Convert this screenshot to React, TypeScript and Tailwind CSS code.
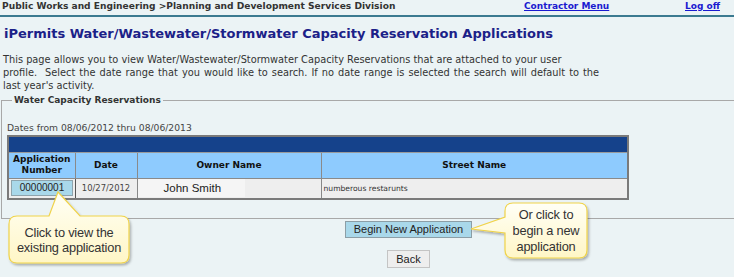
import React from "react";

const verdana = { fontFamily: '"DejaVu Sans", Verdana, sans-serif' };
const arial = { fontFamily: '"Liberation Sans", Arial, sans-serif' };

function Callouts() {
  return (
    <svg
      className="absolute left-0 top-0 pointer-events-none"
      width="734"
      height="277"
      viewBox="0 0 734 277"
    >
      <defs>
        <linearGradient id="cg" x1="0" y1="0" x2="0" y2="1">
          <stop offset="0" stopColor="#fffff6" />
          <stop offset="1" stopColor="#fff6c6" />
        </linearGradient>
        <filter id="sh" x="-20%" y="-20%" width="140%" height="140%">
          <feDropShadow dx="1.5" dy="2" stdDeviation="1.2" floodColor="#000" floodOpacity="0.28" />
        </filter>
      </defs>
      <path
        d="M 17 216 L 49 216 L 58 192 L 80 216 L 121 216 Q 129 216 129 224 L 129 255 Q 129 263 121 263 L 17 263 Q 9 263 9 255 L 9 224 Q 9 216 17 216 Z"
        fill="url(#cg)"
        stroke="#f0d34a"
        strokeWidth="1.2"
        filter="url(#sh)"
      />
      <path
        d="M 513 203 L 579 203 Q 587 203 587 211 L 587 250 Q 587 258 579 258 L 513 258 Q 505 258 505 250 L 505 233 L 471 229 L 505 217 L 505 211 Q 505 203 513 203 Z"
        fill="url(#cg)"
        stroke="#f0d34a"
        strokeWidth="1.2"
        filter="url(#sh)"
      />
    </svg>
  );
}

export default function App() {
  return (
    <div
      className="relative w-[734px] h-[277px] overflow-hidden bg-[#ebf3f5] text-[#333]"
      style={verdana}
    >
      {/* top bar */}
      <div className="flex h-[15px] items-start border-b-2 border-[#3b7a90] box-content text-[9px] font-bold leading-[12px]">
        <div className="w-[524px] pl-[2px] text-[9.1px] text-[#333] whitespace-nowrap">
          Public Works and Engineering &gt;Planning and Development Services Division
        </div>
        <a className="w-[161px] text-[#1a1ad0] underline whitespace-nowrap" href="#">
          Contractor Menu
        </a>
        <a className="text-[#1a1ad0] underline whitespace-nowrap" href="#">
          Log off
        </a>
      </div>

      {/* title */}
      <h1 className="mt-[9px] pl-[4px] text-[13px] font-bold leading-[16px] text-[#1b2188] whitespace-nowrap">
        iPermits Water/Wastewater/Stormwater Capacity Reservation Applications
      </h1>

      {/* description */}
      <p className="mt-[11px] pl-[3px] text-[9.8px] leading-[13px] text-[#333] whitespace-nowrap">
        This page allows you to view Water/Wastewater/Stormwater Capacity Reservations that are attached to your user
        <br />
        <span className="[word-spacing:0.9px]">
          profile.&nbsp; Select the date range that you would like to search. If no date range is selected the search will default to the
        </span>
        <br />
        last year's activity.
      </p>

      {/* fieldset */}
      <fieldset className="mt-[3px] ml-[1px] w-[760px] border border-[#a8a8a8] pl-[5px] pb-[18px]">
        <legend className="ml-[5px] px-[2px] text-[9px] font-bold leading-[11px] text-[#333]">
          Water Capacity Reservations
        </legend>
        <div className="mt-[16px] text-[9.2px] leading-[11px] text-[#444]">
          Dates from 08/06/2012 thru 08/06/2013
        </div>
        <table className="mt-[2px] w-[620px] border-collapse border-2 border-[#7a7a7a] table-fixed">
          <colgroup>
            <col className="w-[67px]" />
            <col className="w-[62px]" />
            <col className="w-[184px]" />
            <col className="w-[307px]" />
          </colgroup>
          <tbody>
            <tr className="h-[16px] bg-[#15428b]">
              <td colSpan={4} className="border border-[#9a9a9a] p-0"></td>
            </tr>
            <tr className="h-[26px] bg-[#8ecbfe] text-[9px] font-bold leading-[11px] text-[#111]">
              <th className="border border-[#8a8a8a] p-0 text-center">
                Application
                <br />
                Number
              </th>
              <th className="border border-[#8a8a8a] p-0 text-center">Date</th>
              <th className="border border-[#8a8a8a] p-0 text-center">Owner Name</th>
              <th className="border border-[#8a8a8a] p-0 text-center">Street Name</th>
            </tr>
            <tr className="h-[21px] bg-[#eeeeee]">
              <td className="border border-[#555] border-t-[#444] px-[2px] py-0">
                <button
                  className="flex h-[16px] w-[62px] items-center justify-center border border-[#8fa4ad] bg-[#a9d8ea] text-[10px] leading-none text-[#222]"
                  style={arial}
                >
                  00000001
                </button>
              </td>
              <td className="border border-[#888] border-t-[#444] p-0 text-center text-[8.4px] text-[#444]">
                10/27/2012
              </td>
              <td className="border border-[#888] border-t-[#444] p-0">
                <div
                  className="flex h-[18px] w-[107px] items-center bg-[#f5f5f5] pl-[26px] text-[11.5px] text-[#222]"
                  style={arial}
                >
                  John Smith
                </div>
              </td>
              <td className="border border-[#888] border-t-[#444] pl-[2px] py-0 text-[7.6px] text-[#333]">
                numberous restarunts
              </td>
            </tr>
          </tbody>
        </table>
      </fieldset>

      {/* buttons */}
      <div className="mt-[2px] pl-[345px]">
        <button
          className="flex h-[17px] w-[127px] items-center justify-center border border-[#8c9ea6] bg-[#a9d8ea] text-[11px] leading-none text-[#222]"
          style={arial}
        >
          Begin New Application
        </button>
      </div>
      <div className="mt-[12px] pl-[387px]">
        <button
          className="flex h-[18px] w-[43px] items-center justify-center border border-[#c4c4c4] bg-[#eeeeee] text-[11px] leading-none text-[#222]"
          style={arial}
        >
          Back
        </button>
      </div>

      <Callouts />

      {/* callout texts */}
      <div
        className="absolute left-[9px] top-[216px] flex h-[47px] w-[120px] items-center justify-center text-center text-[12.8px] leading-[15px] tracking-[-0.2px] text-[#333]"
        style={arial}
      >
        Click to view the
        <br />
        existing application
      </div>
      <div
        className="absolute left-[505px] top-[203px] flex h-[55px] w-[82px] items-center justify-center text-center text-[12.8px] leading-[16px] tracking-[-0.2px] text-[#333]"
        style={arial}
      >
        Or click to
        <br />
        begin a new
        <br />
        application
      </div>
    </div>
  );
}
